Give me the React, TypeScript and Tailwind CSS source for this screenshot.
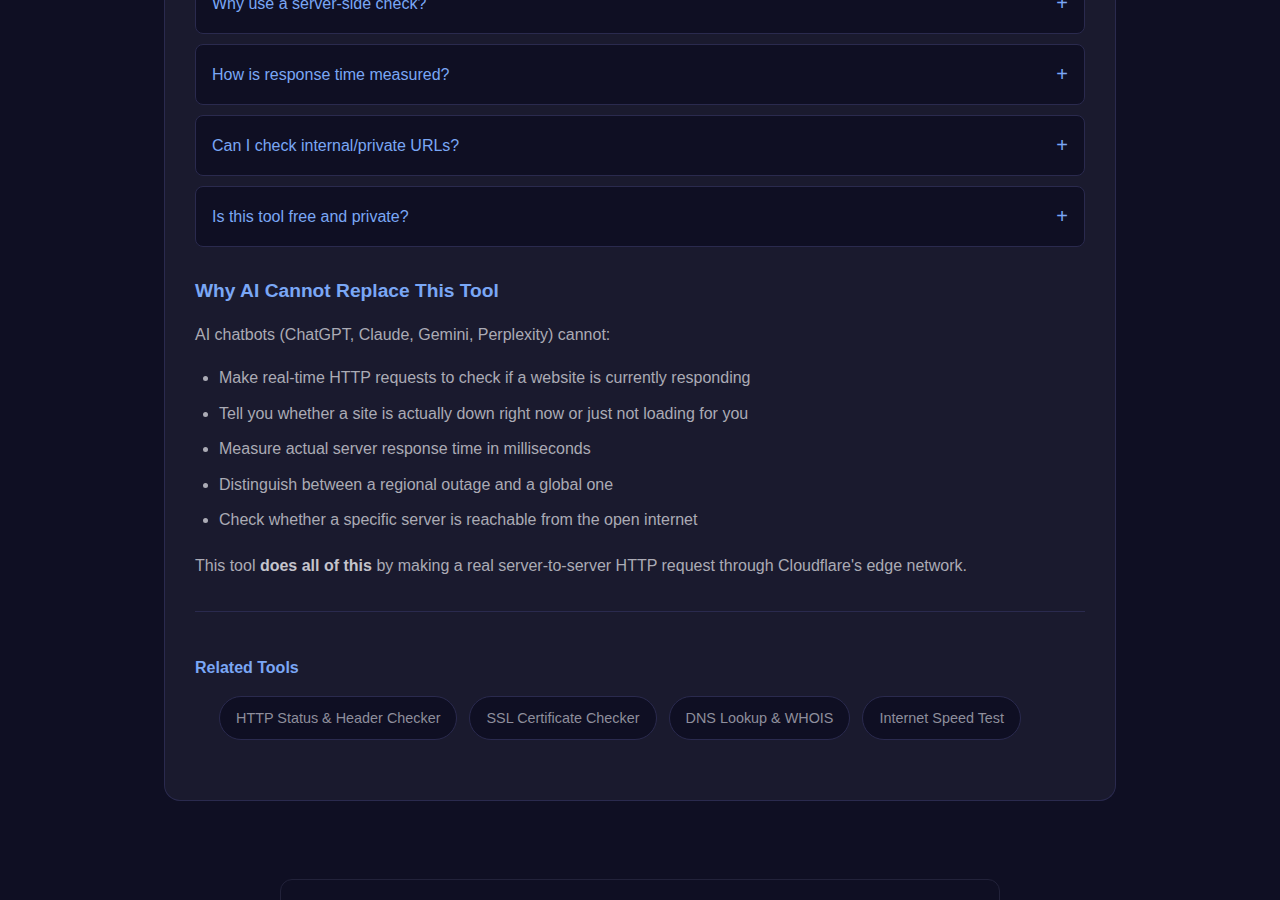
import React from 'react'

const FAQS = [
  'Why use a server-side check?',
  'How is response time measured?',
  'Can I check internal/private URLs?',
  'Is this tool free and private?',
]

const LIMITS = [
  'Make real-time HTTP requests to check if a website is currently responding',
  'Tell you whether a site is actually down right now or just not loading for you',
  'Measure actual server response time in milliseconds',
  'Distinguish between a regional outage and a global one',
  'Check whether a specific server is reachable from the open internet',
]

const RELATED = [
  'HTTP Status & Header Checker',
  'SSL Certificate Checker',
  'DNS Lookup & WHOIS',
  'Internet Speed Test',
]

function FaqItem({ q }: { q: string }) {
  return (
    <div className="flex items-center justify-between bg-[#0f0f23] border border-[#2a2a4e] rounded-lg px-4 py-[18px]">
      <span className="text-[16px] leading-[23px] text-[#7aa7f5]">{q}</span>
      <span className="text-[20px] leading-[23px] text-[#7aa7f5]">+</span>
    </div>
  )
}

export default function App() {
  return (
    <div
      className="h-[900px] overflow-hidden bg-[#0f0f23]"
      style={{ fontFamily: '"Liberation Sans", Arial, sans-serif' }}
    >
      {/* ── main card ── */}
      <div className="mx-auto w-[952px] -mt-[27px] bg-[#1a1a2e] border-x border-b border-[#2a2a4e] rounded-b-2xl px-[30px] pb-[30px]">
        <div className="flex flex-col gap-[10px]">
          {FAQS.map(q => <FaqItem key={q} q={q} />)}
        </div>

        <h2 className="mt-[32px] text-[19.2px] leading-[24px] font-bold text-[#7aa7f5]">
          Why AI Cannot Replace This Tool
        </h2>
        <p className="mt-[19px] text-[16px] leading-[26px] text-[#ababb5]">
          AI chatbots (ChatGPT, Claude, Gemini, Perplexity) cannot:
        </p>
        <ul className="mt-[17px] list-disc pl-6 text-[16px] leading-[25.5px] text-[#ababb5] space-y-[10px] marker:text-[#ababb5]">
          {LIMITS.map(t => <li key={t}>{t}</li>)}
        </ul>
        <p className="mt-[20px] text-[16px] leading-[26px] text-[#ababb5]">
          This tool <strong className="font-bold text-[#c4c4cc]">does all of this</strong> by making a real server-to-server HTTP request through Cloudflare's edge network.
        </p>

        <div className="mt-[32px] border-t border-[#2a2a4e]" />

        <h3 className="mt-[44px] text-[16px] leading-[24px] font-bold text-[#7aa7f5]">Related Tools</h3>
        <ul className="mt-[16px] mb-[30px] pl-6 flex flex-wrap gap-3">
          {RELATED.map(t => (
            <li key={t}>
              <a className="block bg-[#0f0f23] border border-[#2a2a4e] rounded-full px-4 py-[10px] text-[14.4px] leading-[22px] text-[#8e8e9c]">
                {t}
              </a>
            </li>
          ))}
        </ul>
      </div>

      {/* ── next card ── */}
      <div className="mx-auto mt-[78px] w-[720px] h-[120px] border border-[#22223a] rounded-t-xl bg-[#0f0f23]" />
    </div>
  )
}
